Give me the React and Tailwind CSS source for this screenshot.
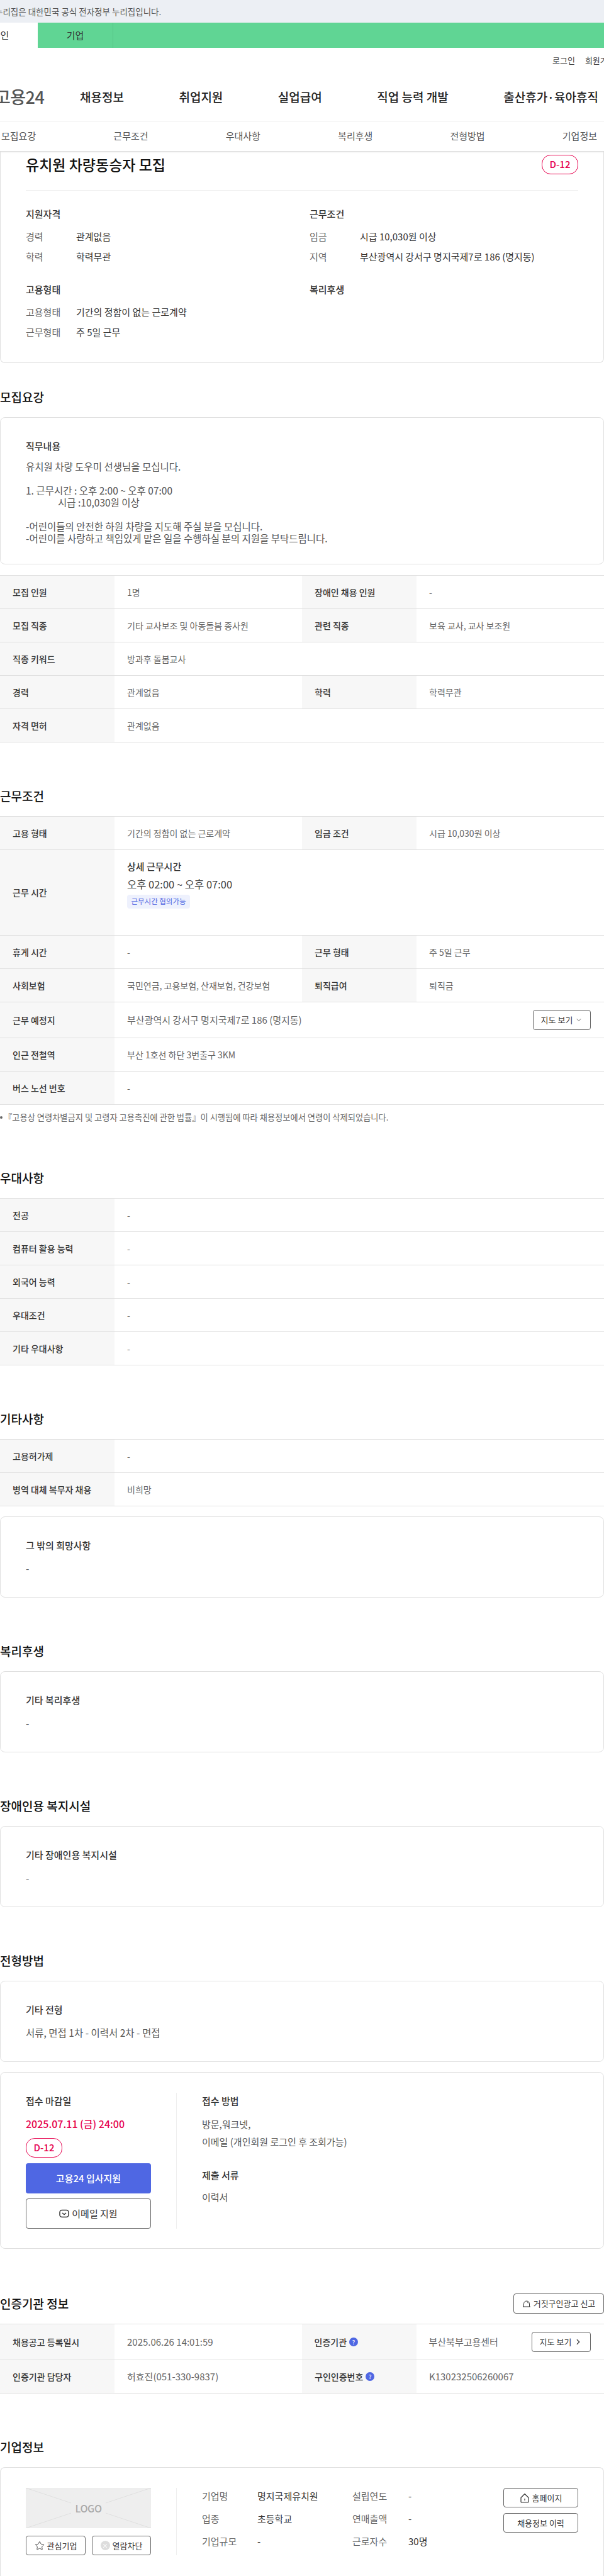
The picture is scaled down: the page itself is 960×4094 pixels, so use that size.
import { ChevronDown, ChevronRight, Star, X } from 'lucide-react';

const th = 'flex w-[182px] shrink-0 items-center bg-[#f7f7f7] px-5 text-[14px] font-medium text-[#333]';
const td = 'flex min-w-0 flex-1 items-center px-5 text-[14px] text-[#666]';

function Row({ cells, className = 'h-[53px]' }) {
  return (
    <div className={`flex border-b border-[#e0e0e0] ${className}`}>
      {cells.map(([label, value], i) => (
        <div key={i} className="flex min-w-0 flex-1">
          <div className={th}>{label}</div>
          <div className={td}>{value}</div>
        </div>
      ))}
    </div>
  );
}

function Table({ rows, children }) {
  return (
    <div className="border-t border-[#e0e0e0]">
      {rows && rows.map((cells, i) => <Row key={i} cells={cells} />)}
      {children}
    </div>
  );
}

function Section({ title, right, className = 'mt-[72px]', children }) {
  return (
    <section className={className}>
      <div className="mb-[19px] flex h-[26px] items-center justify-between">
        <h2 className="text-[19px] leading-[26px] font-medium text-[#111]">{title}</h2>
        {right}
      </div>
      {children}
    </section>
  );
}

function NoteCard({ title, value }) {
  return (
    <div className="h-[129px] rounded-lg border border-[#e0e0e0] px-10 pt-[35px]">
      <h3 className="leading-5 font-medium text-[#333]">{title}</h3>
      <p className="mt-4 text-[15.5px] leading-5 text-[#555]">{value}</p>
    </div>
  );
}

function DDay() {
  return (
    <span className="flex h-[31px] w-[58px] items-center justify-center rounded-[14px] border border-[#e6004d] text-[15px] font-medium text-[#e6004d]">
      D-12
    </span>
  );
}

function InfoBlock({ title, items = [], className = '' }) {
  return (
    <div className={className}>
      <h3 className="leading-5 font-medium text-[#333]">{title}</h3>
      <div className="mt-4 flex flex-col gap-3">
        {items.map(([label, value]) => (
          <div key={label} className="flex leading-5">
            <span className="w-20 shrink-0 text-[#666]">{label}</span>
            <span className="text-[#333]">{value}</span>
          </div>
        ))}
      </div>
    </div>
  );
}

function OutlineButton({ className = '', children }) {
  return (
    <button className={`flex items-center justify-center gap-1 rounded border border-[#666] bg-white text-[#333] ${className}`}>
      {children}
    </button>
  );
}

function HelpDot() {
  return (
    <span className="ml-1 flex h-[14px] w-[14px] items-center justify-center rounded-full bg-[#4f67e3] text-[9px] leading-none text-white">
      ?
    </span>
  );
}

const tabs = ['모집요강', '근무조건', '우대사항', '복리후생', '전형방법', '기업정보'];
const menus = ['채용정보', '취업지원', '실업급여', '직업 능력 개발', '출산휴가·육아휴직'];

const recruitRows = [
  [['모집 인원', '1명'], ['장애인 채용 인원', '-']],
  [['모집 직종', '기타 교사보조 및 아동돌봄 종사원'], ['관련 직종', '보육 교사, 교사 보조원']],
  [['직종 키워드', '방과후 돌봄교사']],
  [['경력', '관계없음'], ['학력', '학력무관']],
  [['자격 면허', '관계없음']],
];

const preferRows = [
  [['전공', '-']],
  [['컴퓨터 활용 능력', '-']],
  [['외국어 능력', '-']],
  [['우대조건', '-']],
  [['기타 우대사항', '-']],
];

const companyInfo = [
  ['기업명', '명지국제유치원', '설립연도', '-'],
  ['업종', '초등학교', '연매출액', '-'],
  ['기업규모', '-', '근로자수', '30명'],
];

export default function App() {
  return (
    <div className="w-[960px] overflow-hidden bg-white font-['Noto_Sans_CJK_KR','Noto_Sans',sans-serif] text-[15px] text-[#333]">
      {/* 상단 배너 */}
      <div className="flex h-9 items-center bg-[#eceff4] text-[#555]">
        <span className="-ml-[8px] text-[13.5px] whitespace-nowrap">누리집은 대한민국 공식 전자정부 누리집입니다.</span>
      </div>
      <div className="flex h-10 bg-[#60d594]">
        <div className="-ml-[59px] flex w-[119px] items-center justify-center bg-white">개인</div>
        <div className="flex w-[120px] items-center justify-center border-r border-[#55c587]">기업</div>
      </div>

      {/* 헤더 */}
      <header className="h-[117px] border-b border-[#ececec]">
        <div className="flex h-10 items-center gap-4 pl-[878px] text-[13px] whitespace-nowrap text-[#444]">
          <span>로그인</span>
          <span>회원가입</span>
        </div>
        <nav className="mt-[20px] flex h-9 items-center">
          <span className="-ml-[8px] w-[135px] shrink-0 text-[27px] leading-9 font-medium tracking-[-0.02em] text-[#555]">고용24</span>
          <div className="flex gap-[87.5px] text-[19px] font-medium whitespace-nowrap text-[#222]">
            {menus.map((m) => <span key={m}>{m}</span>)}
          </div>
        </nav>
      </header>
      <div className="flex h-[48px] items-center justify-between border-b border-[#ddd] pr-[11px] pl-[2px] text-[#555] shadow-[0_1px_2px_rgba(0,0,0,0.08)]">
        {tabs.map((t) => <span key={t}>{t}</span>)}
      </div>

      {/* 요약 카드 */}
      <div className="h-[336px] rounded-b-lg border-x border-b border-[#e0e0e0] px-10">
        <div className="flex h-[62px] items-start justify-between border-b border-[#eee] pt-[5px]">
          <h1 className="text-[23px] leading-[31px] font-medium text-[#111]">유치원 차량동승자 모집</h1>
          <DDay />
        </div>
        <div className="grid grid-cols-[451px_1fr] pt-[27px]">
          <InfoBlock title="지원자격" items={[['경력', '관계없음'], ['학력', '학력무관']]} />
          <InfoBlock title="근무조건" items={[['임금', '시급 10,030원 이상'], ['지역', '부산광역시 강서구 명지국제7로 186 (명지동)']]} />
          <InfoBlock className="mt-8" title="고용형태" items={[['고용형태', '기간의 정함이 없는 근로계약'], ['근무형태', '주 5일 근무']]} />
          <InfoBlock className="mt-8" title="복리후생" />
        </div>
      </div>

      {/* 모집요강 */}
      <Section title="모집요강" className="mt-[41px]">
        <div className="h-[234px] rounded-lg border border-[#e0e0e0] px-10 pt-[35px]">
          <h3 className="leading-5 font-medium text-[#333]">직무내용</h3>
          <div className="mt-[13px] text-[15.5px] leading-[19px] text-[#555]">
            <p>유치원 차량 도우미 선생님을 모십니다.</p>
            <p className="mt-[19px]">1. 근무시간 : 오후 2:00 ~ 오후 07:00</p>
            <p className="pl-[51px]">시급 :10,030원 이상</p>
            <p className="mt-[19px]">-어린이들의 안전한 하원 차량을 지도해 주실 분을 모십니다.</p>
            <p>-어린이를 사랑하고 책임있게 맡은 일을 수행하실 분의 지원을 부탁드립니다.</p>
          </div>
        </div>
        <div className="mt-[17px]">
          <Table rows={recruitRows} />
        </div>
      </Section>

      {/* 근무조건 */}
      <Section title="근무조건">
        <Table>
          <Row cells={[['고용 형태', '기간의 정함이 없는 근로계약'], ['임금 조건', '시급 10,030원 이상']]} />
          <div className="flex h-[136px] border-b border-[#e0e0e0]">
            <div className={th}>근무 시간</div>
            <div className="flex-1 px-5 pt-4 text-[#666]">
              <p className="leading-5 font-medium text-[#333]">상세 근무시간</p>
              <p className="mt-[6px] text-[16.5px] leading-6 text-[#444]">오후 02:00 ~ 오후 07:00</p>
              <span className="mt-[5px] flex h-[22px] w-[100px] items-center justify-center rounded bg-[#eef1fd] text-[11.5px] whitespace-nowrap text-[#4f67e3]">
                근무시간 협의가능
              </span>
            </div>
          </div>
          <Row cells={[['휴게 시간', '-'], ['근무 형태', '주 5일 근무']]} />
          <Row cells={[['사회보험', '국민연금, 고용보험, 산재보험, 건강보험'], ['퇴직급여', '퇴직금']]} />
          <div className="flex h-[57px] border-b border-[#e0e0e0]">
            <div className={th}>근무 예정지</div>
            <div className={`${td} justify-between pr-[21px] text-[#555]`}>
              <span className="text-[15px]">부산광역시 강서구 명지국제7로 186 (명지동)</span>
              <OutlineButton className="h-8 w-[92px] text-[13px]">
                지도 보기
                <ChevronDown size={12} strokeWidth={1.5} />
              </OutlineButton>
            </div>
          </div>
          <Row cells={[['인근 전철역', '부산 1호선 하단 3번출구 3KM']]} />
          <Row cells={[['버스 노선 번호', '-']]} />
        </Table>
        <p className="mt-[11px] flex items-center text-[13.25px] leading-[18px] whitespace-nowrap text-[#666]">
          <span className="mr-[2px] h-1 w-1 shrink-0 rounded-full bg-[#666]" />
          『고용상 연령차별금지 및 고령자 고용촉진에 관한 법률』이 시행됨에 따라 채용정보에서 연령이 삭제되었습니다.
        </p>
      </Section>

      {/* 우대사항 */}
      <Section title="우대사항" className="mt-[74px]">
        <Table rows={preferRows} />
      </Section>

      {/* 기타사항 */}
      <Section title="기타사항">
        <Table rows={[[['고용허가제', '-']], [['병역 대체 복무자 채용', '비희망']]]} />
        <div className="mt-4">
          <NoteCard title="그 밖의 희망사항" value="-" />
        </div>
      </Section>

      <Section title="복리후생">
        <NoteCard title="기타 복리후생" value="-" />
      </Section>

      <Section title="장애인용 복지시설">
        <NoteCard title="기타 장애인용 복지시설" value="-" />
      </Section>

      {/* 전형방법 */}
      <Section title="전형방법">
        <NoteCard title="기타 전형" value="서류, 면접 1차 - 이력서 2차 - 면접" />
        <div className="mt-4 flex h-[281px] rounded-lg border border-[#e0e0e0] pt-8 pb-[31px] pl-10">
          <div className="w-[199px] shrink-0 pt-[3px]">
            <h3 className="leading-5 font-medium text-[#333]">접수 마감일</h3>
            <p className="mt-[15px] text-[16px] leading-[22px] font-medium text-[#e6004d]">2025.07.11 (금) 24:00</p>
            <div className="mt-3">
              <DDay />
            </div>
            <button className="mt-[9px] h-12 w-full rounded bg-[#4f67e3] font-medium text-white">고용24 입사지원</button>
            <OutlineButton className="mt-2 h-12 w-full">
              <svg viewBox="0 0 16 14" fill="none" stroke="#333" strokeWidth="1.5" className="h-[14px] w-4">
                <rect x="1" y="1.5" width="14" height="11" rx="3.5" />
                <path d="m5 6 3 2.5L11 6" />
              </svg>
              이메일 지원
            </OutlineButton>
          </div>
          <div className="mx-10 w-px shrink-0 bg-[#eee]" />
          <div className="pt-[3px] leading-5">
            <h3 className="font-medium text-[#333]">접수 방법</h3>
            <p className="mt-[17px] text-[#555]">방문,워크넷,</p>
            <p className="mt-2 text-[#555]">이메일 (개인회원 로그인 후 조회가능)</p>
            <h3 className="mt-[33px] font-medium text-[#333]">제출 서류</h3>
            <p className="mt-[15px] text-[#555]">이력서</p>
          </div>
        </div>
      </Section>

      {/* 인증기관 정보 */}
      <Section
        title="인증기관 정보"
        className="mt-[74px]"
        right={
          <OutlineButton className="h-8 w-[144px] shrink-0 text-[13px]">
            <svg viewBox="0 0 14 12" fill="none" stroke="#333" strokeWidth="1" className="h-3 w-[14px]">
              <path d="M2.5 11V6.5a4.5 4.5 0 0 1 9 0V11M1 11h12" />
              <path d="M8 3.5a2.5 2.5 0 0 1 1.3 2" />
            </svg>
            거짓구인광고 신고
          </OutlineButton>
        }
      >
        <Table>
          <div className="flex h-[57px] border-b border-[#e0e0e0]">
            <div className={th}>채용공고 등록일시</div>
            <div className={`${td} text-[15px]`}>2025.06.26 14:01:59</div>
            <div className={th}>인증기관<HelpDot /></div>
            <div className={`${td} justify-between pr-[21px] text-[15px]`}>
              부산북부고용센터
              <OutlineButton className="h-8 w-[94px] shrink-0 text-[13px]">
                지도 보기
                <ChevronRight size={14} strokeWidth={2} />
              </OutlineButton>
            </div>
          </div>
          <div className="flex h-[53px] border-b border-[#e0e0e0]">
            <div className={th}>인증기관 담당자</div>
            <div className={`${td} text-[15px]`}>허효진(051-330-9837)</div>
            <div className={th}>구인인증번호<HelpDot /></div>
            <div className={`${td} text-[15px]`}>K130232506260067</div>
          </div>
        </Table>
      </Section>

      {/* 기업정보 */}
      <Section title="기업정보">
        <div className="flex h-[173px] rounded-t-lg border border-b-0 border-[#e0e0e0] pt-8 pl-10">
          <div className="w-[199px] shrink-0">
            <div className="relative flex h-16 items-center justify-center bg-[#eee]">
              <svg viewBox="0 0 199 64" className="absolute inset-0 h-full w-full" stroke="#e0e0e0" strokeWidth="1">
                <path d="M0 0 72 24M199 0l-72 24M0 64l72-24M199 64l-72-24" />
              </svg>
              <span className="relative text-[16px] font-medium tracking-tight text-[#aaa]">LOGO</span>
            </div>
            <div className="mt-3 flex justify-between">
              <OutlineButton className="h-[31px] w-[95px] text-[13px]">
                <Star size={16} strokeWidth={1.3} />
                관심기업
              </OutlineButton>
              <OutlineButton className="h-[31px] w-[94px] text-[13px]">
                <span className="flex h-[15px] w-[15px] items-center justify-center rounded-full bg-[#ddd]">
                  <X size={10} color="#fff" strokeWidth={2.5} />
                </span>
                열람차단
              </OutlineButton>
            </div>
          </div>
          <div className="mx-10 h-[107px] w-px shrink-0 bg-[#eee]" />
          <div className="grid h-fit w-[399px] grid-cols-[88px_151px_89px_1fr] gap-y-4 pt-[3px] leading-5">
            {companyInfo.map((r) => (
              <div key={r[0]} className="contents">
                <span className="text-[#666]">{r[0]}</span>
                <span className="text-[#333]">{r[1]}</span>
                <span className="text-[#666]">{r[2]}</span>
                <span className="text-[#333]">{r[3]}</span>
              </div>
            ))}
          </div>
          <div className="ml-[80px] flex w-[119px] shrink-0 flex-col gap-[9px]">
            <OutlineButton className="h-[31px] text-[13px]">
              <svg viewBox="0 0 16 16" fill="none" stroke="#333" strokeWidth="1.2" className="h-4 w-4">
                <path d="M2 7.5 8 1.5l6 6V14a1 1 0 0 1-1 1H3a1 1 0 0 1-1-1z" strokeLinejoin="round" />
                <path d="M8 9v3" />
              </svg>
              홈페이지
            </OutlineButton>
            <OutlineButton className="h-[31px] text-[13px]">채용정보 이력</OutlineButton>
          </div>
        </div>
      </Section>
    </div>
  );
}
